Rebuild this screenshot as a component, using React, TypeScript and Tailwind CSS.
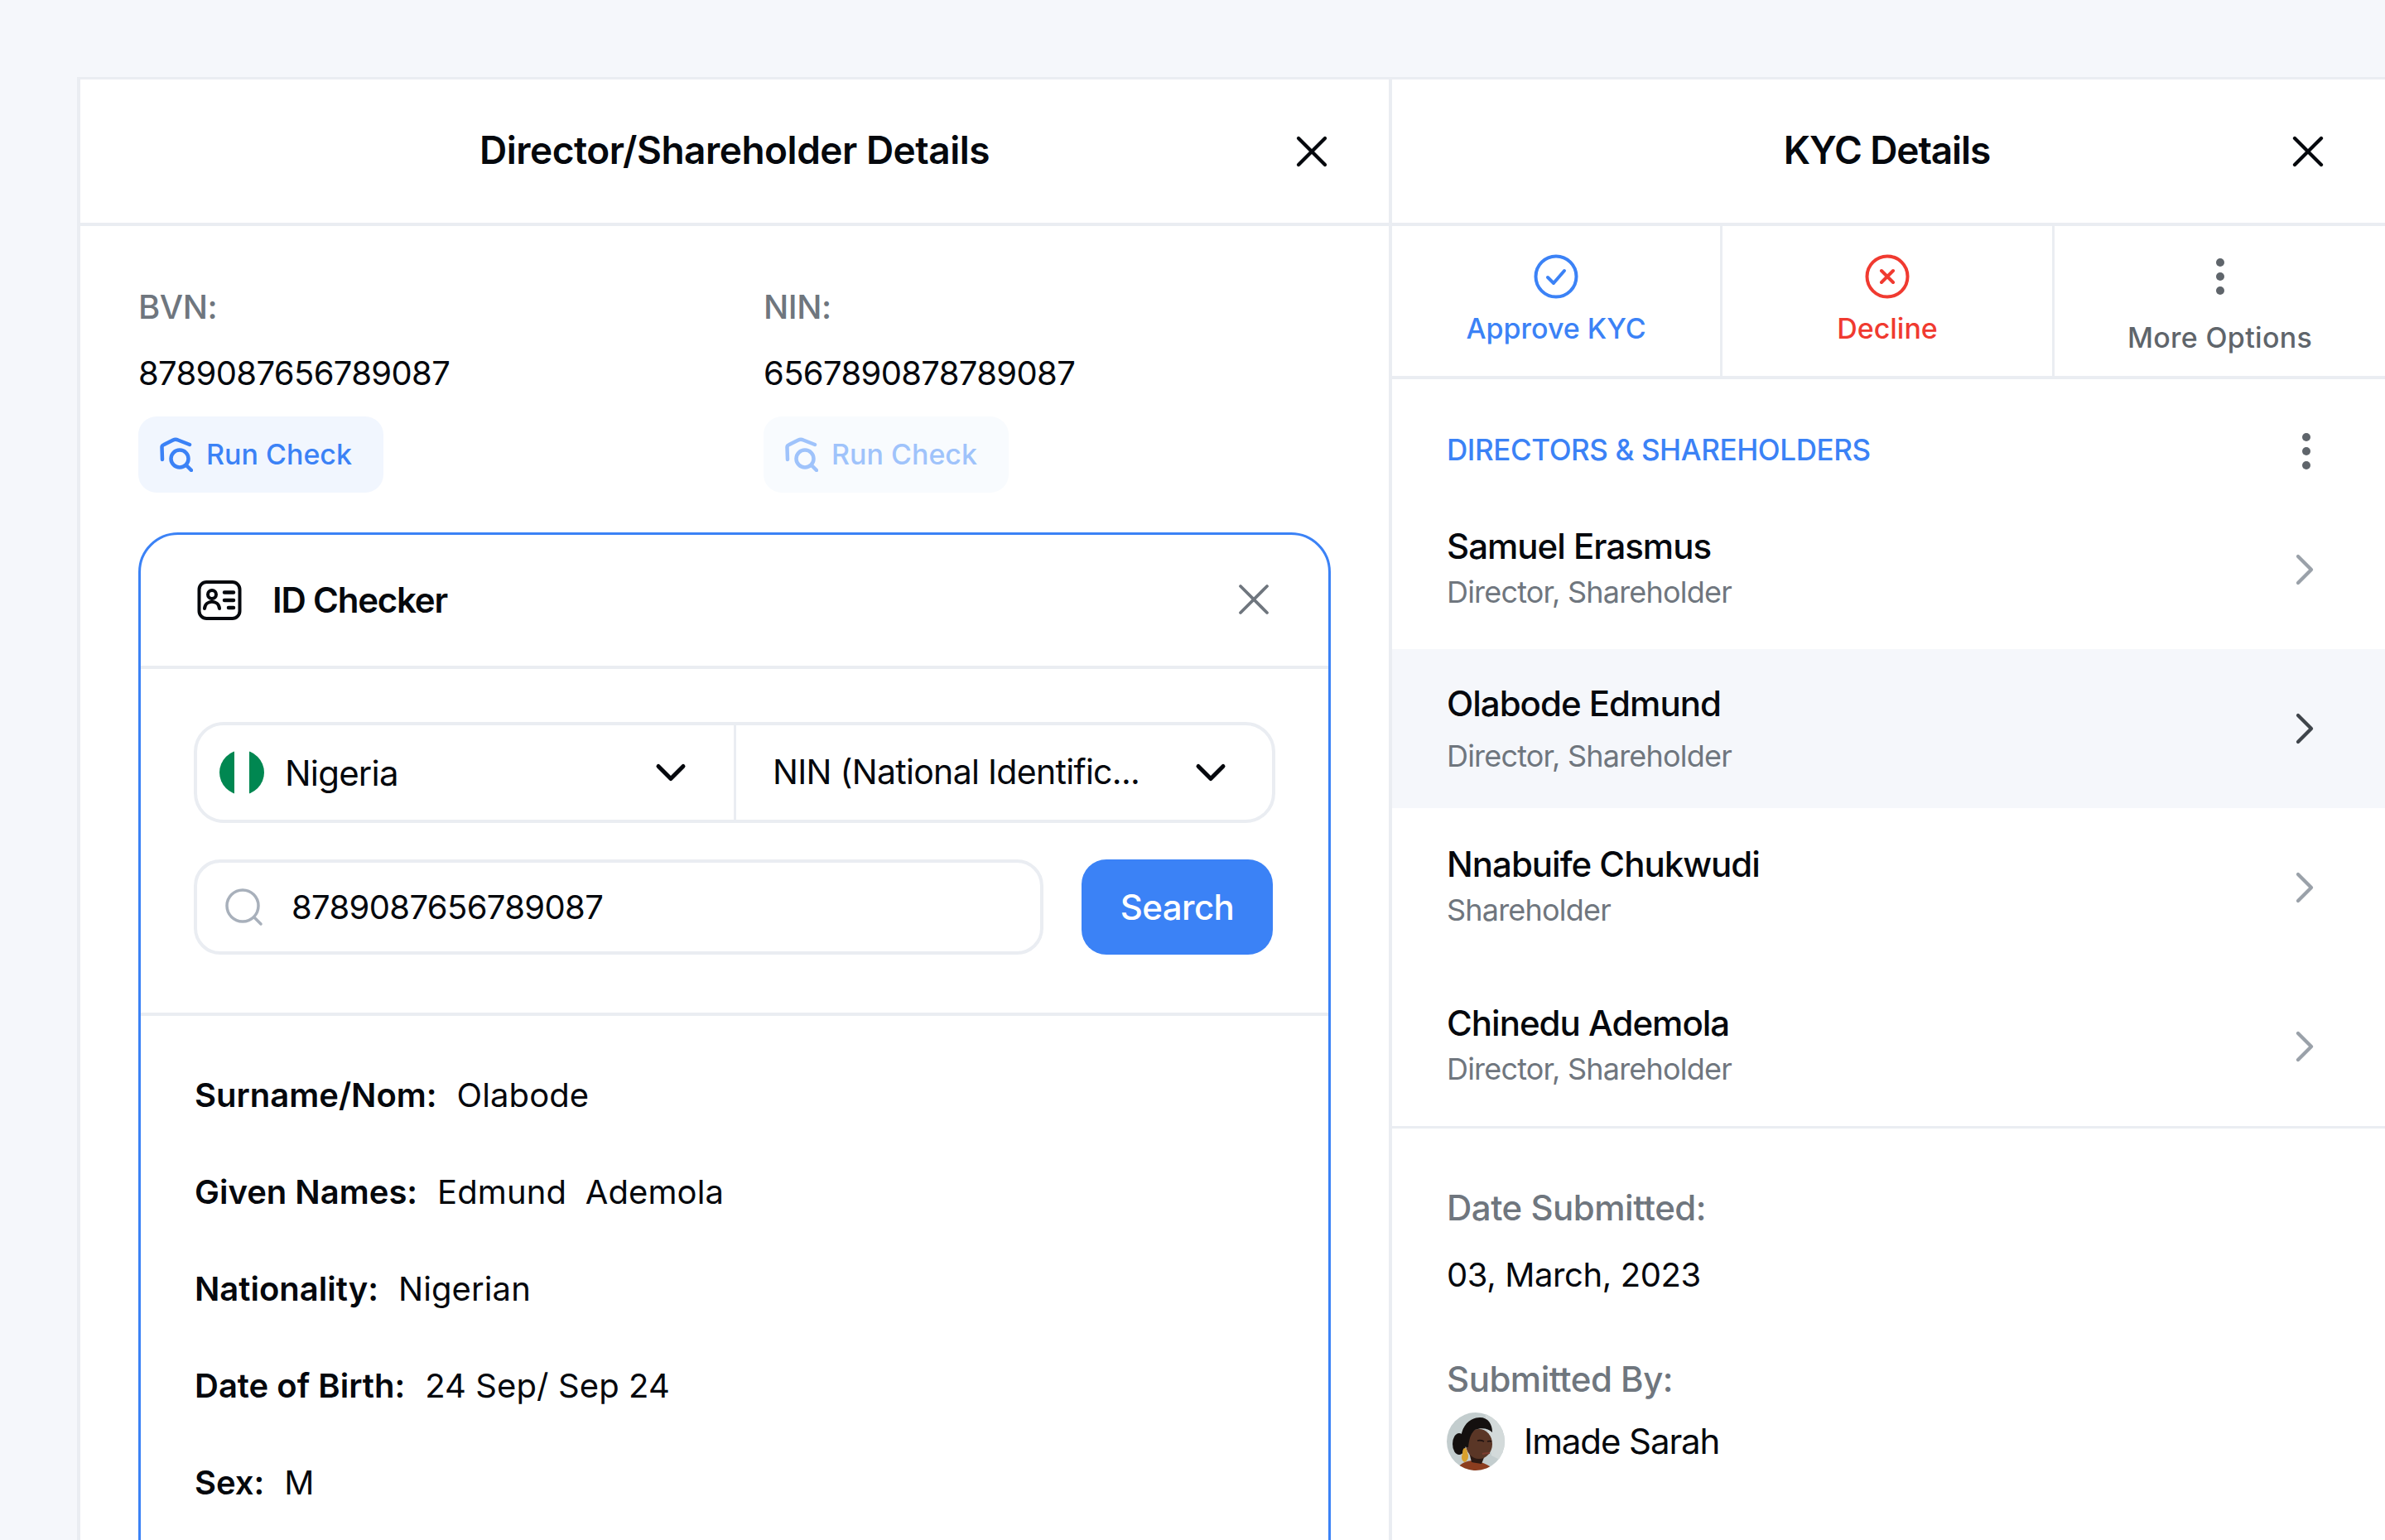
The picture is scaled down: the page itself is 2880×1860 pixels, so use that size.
import { ChevronDown, ChevronRight, X } from 'lucide-react';

const people = [
  { name: 'Samuel Erasmus', role: 'Director, Shareholder' },
  { name: 'Olabode Edmund', role: 'Director, Shareholder', active: true },
  { name: 'Nnabuife Chukwudi', role: 'Shareholder' },
  { name: 'Chinedu Ademola', role: 'Director, Shareholder' },
];

const fields = [
  { label: 'Surname/Nom:', value: 'Olabode' },
  { label: 'Given Names:', value: 'Edmund\u00a0 Ademola' },
  { label: 'Nationality:', value: 'Nigerian' },
  { label: 'Date of Birth:', value: '24 Sep/ Sep 24' },
  { label: 'Sex:', value: 'M' },
];

function Dots() {
  return (
    <span className="flex flex-col gap-[7px]">
      <span className="size-[10px] rounded-full bg-[#5f656b]" />
      <span className="size-[10px] rounded-full bg-[#5f656b]" />
      <span className="size-[10px] rounded-full bg-[#5f656b]" />
    </span>
  );
}

function RunCheckIcon() {
  return (
    <svg width="40" height="42" viewBox="0 0 40 42" fill="none" stroke="currentColor" strokeWidth="4.5" strokeLinecap="round" strokeLinejoin="round">
      <path d="M3 27 L2.5 12 Q2.5 10 5 9 L16 3.5 Q19 2 22 3.5 L36 9" />
      <circle cx="24" cy="26" r="10.5" />
      <path d="M32.5 34.5 L38 40" />
    </svg>
  );
}

function RunCheck({ disabled }: { disabled?: boolean }) {
  return (
    <button className={`flex h-[92px] w-[296px] items-center gap-[16px] rounded-[22px] pl-[26px] text-[34px] font-medium ${disabled ? 'bg-[#f8fbfe] text-[#9fc3fb]' : 'bg-[#f1f6fe] text-[#3b82f6]'}`}>
      <RunCheckIcon />
      <span className="pb-[2px]">Run Check</span>
    </button>
  );
}

function IdCardIcon() {
  return (
    <svg width="54" height="48" viewBox="0 0 54 48" fill="none" stroke="#05080d" strokeWidth="4" strokeLinecap="round">
      <rect x="2.5" y="2" width="49" height="44" rx="9" />
      <circle cx="18" cy="17" r="5" />
      <path d="M9 34 C10 23 26 23 27 34" />
      <path d="M33 14.5 H44 M33 24 H44 M38 33 H44" strokeWidth="4.5" />
    </svg>
  );
}

function NigeriaFlag() {
  return (
    <svg width="54" height="54" viewBox="0 0 54 54" className="shrink-0">
      <clipPath id="flag-circle">
        <circle cx="27" cy="27" r="27" />
      </clipPath>
      <g clipPath="url(#flag-circle)">
        <rect width="54" height="54" fill="#fff" />
        <rect width="18" height="54" fill="#008751" />
        <rect x="36" width="18" height="54" fill="#008751" />
      </g>
    </svg>
  );
}

function Avatar() {
  return (
    <svg width="70" height="70" viewBox="0 0 70 70" className="shrink-0">
      <clipPath id="avatar-circle">
        <circle cx="35" cy="35" r="35" />
      </clipPath>
      <g clipPath="url(#avatar-circle)">
        <rect width="70" height="70" fill="#c3cdce" />
        <path d="M46 0 H70 V60 L54 52 Z" fill="#d3dada" />
        <path d="M12 70 C14 62 24 58 32 58 C42 60 50 62 58 70 Z" fill="#8c3d1f" />
        <path d="M27 48 L46 52 L42 62 L30 60 Z" fill="#2c1a14" />
        <ellipse cx="15" cy="38" rx="8" ry="13" fill="#14100f" />
        <ellipse cx="39" cy="38" rx="16" ry="18" fill="#5a3626" />
        <path d="M17 34 C17 16 28 6 40 6 C50 6 55 14 55 24 C50 19 42 18 34 21 C29 25 27 32 26 42 C22 42 18 40 17 34 Z" fill="#14100f" />
        <path d="M21 43 C24 43 25 46 25 49 C27 52 26 58 22 60 C18 59 17 54 19 50 C19 47 19 45 21 43 Z" fill="#d9a02c" />
        <path d="M37 34 Q41 33 45 35 M49 35 Q52 34 54 35" stroke="#1f1210" strokeWidth="1.6" fill="none" />
        <path d="M43 50 Q47 49 52 49" stroke="#7d3d30" strokeWidth="2" fill="none" />
      </g>
    </svg>
  );
}

export default function App() {
  return (
    <div className="h-[1860px] w-[2880px] overflow-hidden bg-[#f5f7fb] pt-[93px] pl-[93px] [font-family:Inter,sans-serif] text-[#05080d]">
      <div className="flex h-[1800px] w-[2787px] border-t-[3px] border-l-[4px] border-[#eaedf2] bg-white">
        {/* left panel */}
        <section className="w-[1584px] shrink-0 border-r-[4px] border-[#eaedf2]">
          <header className="relative flex h-[177px] items-center justify-center border-b-[4px] border-[#eaedf2] pb-[2px]">
            <h1 className="text-[46px] font-semibold tracking-[-0.5px]">Director/Shareholder Details</h1>
            <X className="absolute top-[55px] right-[61px] size-[64px]" strokeWidth={1.6} />
          </header>

          <div className="px-[70px] pt-[70px]">
            <div className="flex">
              <div className="w-[755px]">
                <p className="text-[40px] leading-[56px] font-medium tracking-[-0.5px] text-[#6f767e]">BVN:</p>
                <p className="mt-[24px] text-[40px] leading-[56px] tracking-[-0.65px]">8789087656789087</p>
                <div className="mt-[24px]"><RunCheck /></div>
              </div>
              <div>
                <p className="text-[40px] leading-[56px] font-medium tracking-[-0.5px] text-[#6f767e]">NIN:</p>
                <p className="mt-[24px] text-[40px] leading-[56px] tracking-[-0.65px]">6567890878789087</p>
                <div className="mt-[24px]"><RunCheck disabled /></div>
              </div>
            </div>

            <div className="mt-[48px] h-[1300px] w-[1440px] rounded-[48px] border-[3px] border-[#3b82f6]">
              <div className="relative flex h-[162px] items-center gap-[37px] border-b-[4px] border-[#eaedf2] pl-[68px]">
                <IdCardIcon />
                <h2 className="pb-[2px] text-[42px] font-semibold tracking-[-1.2px]">ID Checker</h2>
                <X className="absolute top-[46px] right-[58px] size-[64px] text-[#6f767e]" strokeWidth={1.4} />
              </div>

              <div className="border-b-[4px] border-[#eaedf2] px-[64px] pt-[64px] pb-[70px]">
                <div className="flex h-[122px] w-[1306px] rounded-[36px] border-[4px] border-[#eaedf2]">
                  <div className="flex w-[651px] items-center border-r-[3px] border-[#eaedf2] pr-[46px] pl-[27px]">
                    <NigeriaFlag />
                    <span className="ml-[25px] flex-1 text-[42px] tracking-[-0.8px]">Nigeria</span>
                    <ChevronDown className="size-[60px]" strokeWidth={2} />
                  </div>
                  <div className="flex flex-1 items-center pr-[44px] pl-[44px]">
                    <span className="flex-1 text-[41px] tracking-[-0.7px] whitespace-nowrap">NIN (National Identific...</span>
                    <ChevronDown className="size-[60px]" strokeWidth={2} />
                  </div>
                </div>
                <div className="mt-[44px] flex h-[115px] w-[1303px] justify-between">
                  <div className="flex w-[1026px] items-center rounded-[32px] border-[4px] border-[#eaedf2] pl-[34px]">
                    <svg width="46" height="46" viewBox="0 0 46 46" fill="none" stroke="#a8b0bb" strokeWidth="3.5" strokeLinecap="round">
                      <circle cx="21" cy="21" r="19" />
                      <path d="M35 35 L43 43" />
                    </svg>
                    <span className="ml-[34px] text-[40px] tracking-[-0.65px]">8789087656789087</span>
                  </div>
                  <button className="w-[231px] rounded-[30px] bg-[#3b82f6] text-[42px] font-medium tracking-[-0.6px] text-white">Search</button>
                </div>
              </div>

              <div className="flex flex-col gap-[61px] px-[65px] pt-[68px]">
                {fields.map((f) => (
                  <p key={f.label} className="flex gap-[24px] text-[40px] leading-[56px] whitespace-nowrap">
                    <span className="font-semibold">{f.label}</span>
                    <span className="tracking-[0.1px]">{f.value}</span>
                  </p>
                ))}
              </div>
            </div>
          </div>
        </section>

        {/* right panel */}
        <section className="w-[1199px] shrink-0">
          <header className="relative flex h-[177px] items-center justify-center border-b-[4px] border-[#eaedf2] pr-[4px] pb-[2px]">
            <h1 className="text-[46px] font-semibold tracking-[-1.1px]">KYC Details</h1>
            <X className="absolute top-[55px] right-[61px] size-[64px]" strokeWidth={1.6} />
          </header>

          <div className="flex h-[185px] border-b-[4px] border-[#eaedf2]">
            <button className="flex w-[399px] flex-col items-center border-r-[3px] border-[#eaedf2] pt-[34px] text-[34px] font-medium text-[#3b82f6]">
              <svg width="54" height="54" viewBox="0 0 54 54" fill="none" stroke="currentColor" strokeWidth="4" strokeLinecap="round" strokeLinejoin="round">
                <circle cx="27" cy="27" r="24.5" />
                <path d="M17 28 L24 35 L37 20" />
              </svg>
              <span className="mt-[10px]">Approve KYC</span>
            </button>
            <button className="flex w-[401px] flex-col items-center border-r-[3px] border-[#eaedf2] pt-[34px] text-[34px] font-medium text-[#f03a30]">
              <svg width="54" height="54" viewBox="0 0 54 54" fill="none" stroke="currentColor" strokeWidth="4" strokeLinecap="round">
                <circle cx="27" cy="27" r="24.5" />
                <path d="M20 20 L34 34 M34 20 L20 34" />
              </svg>
              <span className="mt-[10px]">Decline</span>
            </button>
            <button className="flex w-[399px] flex-col items-center pt-[39px] text-[34px] font-medium tracking-[0.3px] text-[#5f656b]">
              <Dots />
              <span className="mt-[26px]">More Options</span>
            </button>
          </div>

          <div className="flex h-[134px] items-center justify-between pt-[36px] pr-[90px] pl-[66px]">
            <h3 className="text-[35px] font-medium tracking-[-0.4px] text-[#3b82f6]">DIRECTORS &amp; SHAREHOLDERS</h3>
            <span className="mt-[3px]"><Dots /></span>
          </div>

          <ul className="border-b-[3px] border-[#eaedf2]">
            {people.map((p) => (
              <li key={p.name} className={`flex h-[192px] items-center justify-between pr-[65px] pl-[66px] ${p.active ? 'bg-[#f5f7fb]' : ''}`}>
                <div className={p.active ? 'pb-[1px]' : 'pb-[6px]'}>
                  <p className="text-[42px] leading-[56px] font-medium tracking-[-1px]">{p.name}</p>
                  <p className={`text-[36px] leading-[48px] tracking-[-0.8px] text-[#6f767e] ${p.active ? 'mt-[11px]' : 'mt-[3px]'}`}>{p.role}</p>
                </div>
                <ChevronRight className={`size-[64px] ${p.active ? 'text-[#3f454b]' : 'text-[#9aa1a9]'}`} strokeWidth={1.6} />
              </li>
            ))}
          </ul>

          <div className="pl-[66px]">
            <p className="mt-[68px] text-[42px] leading-[56px] font-medium tracking-[-0.5px] text-[#6f767e]">Date Submitted:</p>
            <p className="mt-[25px] text-[40px] leading-[56px] tracking-[-0.4px]">03, March, 2023</p>
            <p className="mt-[70px] text-[42px] leading-[56px] font-medium tracking-[-0.5px] text-[#6f767e]">Submitted By:</p>
            <div className="mt-[12px] flex items-center gap-[23px]">
              <Avatar />
              <span className="pb-[2px] text-[42px] tracking-[-1.1px]">Imade Sarah</span>
            </div>
          </div>
        </section>
      </div>
    </div>
  );
}
